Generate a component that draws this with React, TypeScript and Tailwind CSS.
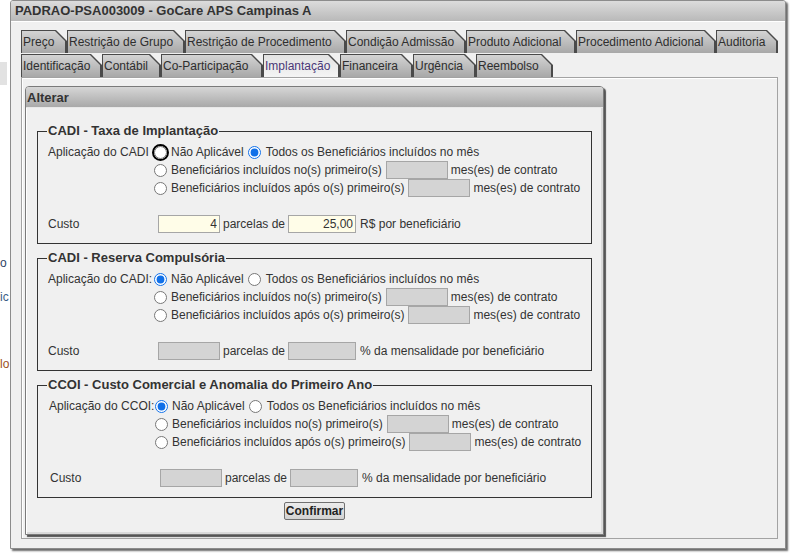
import React from 'react';

type Tab = { label: string; w: string; active?: boolean };

const row1: Tab[] = [
  { label: 'Preço', w: 'w-[46px]' },
  { label: 'Restrição de Grupo', w: 'w-[118px]' },
  { label: 'Restrição de Procedimento', w: 'w-[161px]' },
  { label: 'Condição Admissão', w: 'w-[120px]' },
  { label: 'Produto Adicional', w: 'w-[110px]' },
  { label: 'Procedimento Adicional', w: 'w-[140px]' },
  { label: 'Auditoria', w: 'w-[62px]' },
];

const row2: Tab[] = [
  { label: 'Identificação', w: 'w-[81px]' },
  { label: 'Contábil', w: 'w-[59px]' },
  { label: 'Co-Participação', w: 'w-[102px]' },
  { label: 'Implantação', w: 'w-[77px]', active: true },
  { label: 'Financeira', w: 'w-[73px]' },
  { label: 'Urgência', w: 'w-[63px]' },
  { label: 'Reembolso', w: 'w-[77px]' },
];

function TabItem({ tab }: { tab: Tab }) {
  return (
    <div
      className={`${tab.w} h-[23px] shrink-0 bg-[#4a4a4a] [clip-path:polygon(0_0,calc(100%_-_11px)_0,100%_11px,100%_100%,0_100%)]`}
    >
      <div
        className={`ml-px mt-px mr-[2px] h-[22px] pl-[1px] leading-[22px] whitespace-nowrap [clip-path:polygon(0_0,calc(100%_-_10px)_0,100%_10px,100%_100%,0_100%)] ${
          tab.active
            ? 'bg-linear-to-b from-[#e2e2e2] to-[#f4f4f4] text-[#4a3777]'
            : 'bg-linear-to-b from-[#d4d4d4] to-[#a8a8a8] text-[#2e2e2e]'
        }`}
      >
        {tab.label}
      </div>
    </div>
  );
}

function Radio({ name, checked, focus, className = '' }: { name: string; checked?: boolean; focus?: boolean; className?: string }) {
  const input = (
    <input
      type="radio"
      name={name}
      readOnly
      checked={!!checked}
      className={`m-0 size-[13px] shrink-0 accent-[#1170e8] ${focus ? '' : className}`}
    />
  );
  if (!focus) return input;
  // focus ring drawn round the radio, as the browser shows it
  return (
    <span className={`-m-[2px] flex size-[17px] shrink-0 items-center justify-center rounded-full border-2 border-black ${className}`}>
      {input}
    </span>
  );
}

function Field({ w, value, yellow }: { w: string; value?: string; yellow?: boolean }) {
  return (
    <input
      type="text"
      readOnly
      value={value ?? ''}
      className={`${w} h-[18px] shrink-0 border border-[#a6a6a6] px-[2px] text-right text-[12px] text-[#333] outline-none ${
        yellow ? 'bg-[#fffde8]' : 'bg-[#d4d4d4]'
      }`}
    />
  );
}

type SectionProps = {
  legend: string;
  label: string;
  name: string;
  checked: number;
  focus?: boolean;
  yellow?: boolean;
  suffix: string;
  shift?: boolean;
  first?: boolean;
};

function Section({ legend, label, name, checked, focus, yellow, suffix, shift, first }: SectionProps) {
  return (
    <fieldset className={`border border-[#333] pl-[10px] pr-[10px] pt-[4px] pb-[10px] ${first ? '' : 'mt-[6px]'}`}>
      <legend className="ml-[-1px] px-[1px] text-[13px] leading-[16px] font-bold text-[#333]">{legend}</legend>
      <div className={`flex ${shift ? 'pl-[1px]' : ''}`}>
        <div className="w-[106px] shrink-0 leading-[18px] whitespace-nowrap">{label}</div>
        <div className="flex flex-col">
          <div className="flex h-[18px] items-center whitespace-nowrap">
            <Radio name={name} checked={checked === 0} focus={focus} />
            <span className="ml-[4px]">Não Aplicável</span>
            <Radio name={name} checked={checked === 1} className="ml-[4px]" />
            <span className="ml-[5px]">Todos os Beneficiários incluídos no mês</span>
          </div>
          <div className="flex h-[18px] items-center whitespace-nowrap">
            <Radio name={name} />
            <span className="ml-[4px]">Beneficiários incluídos no(s) primeiro(s)</span>
            <span className="ml-[4px]"><Field w="w-[62px]" /></span>
            <span className="ml-[3px]">mes(es) de contrato</span>
          </div>
          <div className="flex h-[18px] items-center whitespace-nowrap">
            <Radio name={name} />
            <span className="ml-[4px]">Beneficiários incluídos após o(s) primeiro(s)</span>
            <span className="ml-[4px]"><Field w="w-[62px]" /></span>
            <span className="ml-[3px]">mes(es) de contrato</span>
          </div>
        </div>
      </div>
      <div className={`mt-[18px] flex h-[18px] items-center whitespace-nowrap ${shift ? 'pl-[2px]' : ''}`}>
        <div className="w-[110px] shrink-0">Custo</div>
        <Field w="w-[62px]" value={yellow ? '4' : ''} yellow={yellow} />
        <span className="ml-[3px] mr-[3px]">parcelas de</span>
        <Field w="w-[68px]" value={yellow ? '25,00' : ''} yellow={yellow} />
        <span className="ml-[4px]">{suffix}</span>
      </div>
    </fieldset>
  );
}

export default function App() {
  return (
    <div className="flex h-[555px] w-[791px] overflow-hidden bg-white font-['Liberation_Sans',Arial,sans-serif] text-[12px] text-[#333]">
      {/* page behind the window */}
      <div className="flex w-[10px] shrink-0 flex-col overflow-hidden">
        <div className="mt-[62px] h-[23px] w-[7px] bg-[#e2e2e2]" />
        <div className="mt-[171px] leading-[14px] text-[#2d4466]">o</div>
        <div className="mt-[20px] leading-[14px] text-[#3a5c86]">ic</div>
        <div className="mt-[53px] leading-[14px] text-[#9c4f22]">lo</div>
      </div>

      {/* window */}
      <div className="flex h-[549px] w-[776px] shrink-0 flex-col rounded-t-[3px] border border-[#8c8c8c] bg-[#f0f0f0] shadow-[2px_2px_2px_#6a6a6a]">
        <div className="h-[21px] shrink-0 rounded-t-[2px] border-b border-white bg-linear-to-b from-[#dcdcdc] to-[#b9b9b9] pl-[4px] text-[13px] leading-[20px] font-bold text-[#333]">
          PADRAO-PSA003009 - GoCare APS Campinas A
        </div>
        <div className="flex flex-col pl-[10px] pr-[7px] pt-[8px]">
          <div className="flex">
            {row1.map(t => <TabItem key={t.label} tab={t} />)}
          </div>
          <div className="mt-px flex">
            {row2.map(t => <TabItem key={t.label} tab={t} />)}
          </div>

          {/* tab panel */}
          <div className="h-[462px] border border-[#a3a3a3] bg-[#f0f0f0] pl-[3px] pt-[8px] shadow-[inset_1px_1px_0_#fff]">
            <div className="flex w-[579px] flex-col rounded-t-[4px] border border-[#7a7a7a] bg-[#f0f0f0] shadow-[2px_2px_1px_#555]">
              <div className="h-[21px] rounded-t-[3px] border-b border-[#e8e8e8] bg-linear-to-b from-[#d6d6d6] to-[#a9a9a9] pl-[1px] text-[13px] leading-[21px] font-bold text-[#333]">
                Alterar
              </div>
              <div className="flex flex-col px-[11px] pt-[15px] pb-[14px] shadow-[inset_1px_0_0_#fff,inset_-2px_-2px_0_#dadada]">
                <Section
                  first
                  legend="CADI - Taxa de Implantação"
                  label="Aplicação do CADI"
                  name="cadi1"
                  checked={1}
                  focus
                  yellow
                  suffix="R$ por beneficiário"
                />
                <Section
                  legend="CADI - Reserva Compulsória"
                  label="Aplicação do CADI:"
                  name="cadi2"
                  checked={0}
                  suffix="% da mensalidade por beneficiário"
                />
                <Section
                  legend="CCOI - Custo Comercial e Anomalia do Primeiro Ano"
                  label="Aplicação do CCOI:"
                  name="ccoi"
                  checked={0}
                  shift
                  suffix="% da mensalidade por beneficiário"
                />
                <button className="mt-[4px] h-[18px] w-[61px] self-center rounded-[2px] border border-[#707070] bg-linear-to-b from-[#ececec] to-[#d2d2d2] text-[12px] leading-[16px] font-bold text-[#222]">
                  Confirmar
                </button>
              </div>
            </div>
          </div>
        </div>
      </div>
    </div>
  );
}
